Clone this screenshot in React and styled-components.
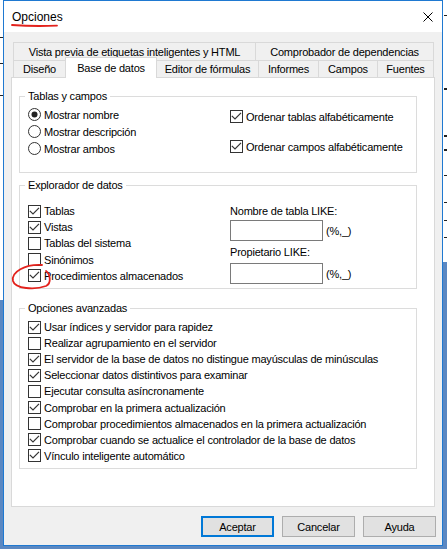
import React from 'react';
import styled, { createGlobalStyle, css } from 'styled-components';

// desktop behind the dialog: white app window on the upper edges, blue below,
// with a few dark text ticks peeking out on both sides
const GlobalStyle = createGlobalStyle`
	html, body {
		margin: 0;
		padding: 0;
	}
	body {
		width: 447px;
		height: 549px;
		overflow: hidden;
		font-family: "Liberation Sans", Arial, sans-serif;
		background:
			linear-gradient(#222, #222) 0 37px / 3px 1px no-repeat,
			linear-gradient(#222, #222) 0 63px / 3px 1px no-repeat,
			linear-gradient(#222, #222) 0 95px / 3px 1px no-repeat,
			linear-gradient(#222, #222) 100% 15px / 3px 1px no-repeat,
			linear-gradient(#222, #222) 100% 88px / 3px 2px no-repeat,
			linear-gradient(#222, #222) 100% 135px / 3px 2px no-repeat,
			linear-gradient(#222, #222) 100% 149px / 3px 2px no-repeat,
			linear-gradient(#222, #222) 100% 175px / 3px 1px no-repeat,
			linear-gradient(#222, #222) 100% 202px / 3px 1px no-repeat,
			linear-gradient(#222, #222) 100% 220px / 3px 1px no-repeat,
			linear-gradient(#222, #222) 100% 237px / 3px 1px no-repeat,
			linear-gradient(#fff, #fff) 0 0 / 3px 300px no-repeat,
			linear-gradient(#fff, #fff) 100% 0 / 4px 262px no-repeat,
			#5b88c2;
	}
`;

const topTabs = [
	{ label: 'Vista previa de etiquetas inteligentes y HTML', w: 242 },
	{ label: 'Comprobador de dependencias', w: 178 }
];

const bottomTabs = [
	{ label: 'Diseño', w: 52 },
	{ label: 'Base de datos', w: 91, active: true },
	{ label: 'Editor de fórmulas', w: 102 },
	{ label: 'Informes', w: 60 },
	{ label: 'Campos', w: 59 },
	{ label: 'Fuentes', w: 56 }
];

const explorerItems = [
	{ label: 'Tablas', on: true },
	{ label: 'Vistas', on: true },
	{ label: 'Tablas del sistema', on: false },
	{ label: 'Sinónimos', on: false },
	{ label: 'Procedimientos almacenados', on: true }
];

const advancedItems = [
	{ label: 'Usar índices y servidor para rapidez', on: true },
	{ label: 'Realizar agrupamiento en el servidor', on: false },
	{ label: 'El servidor de la base de datos no distingue mayúsculas de minúsculas', on: true },
	{ label: 'Seleccionar datos distintivos para examinar', on: true },
	{ label: 'Ejecutar consulta asíncronamente', on: false },
	{ label: 'Comprobar en la primera actualización', on: true },
	{ label: 'Comprobar procedimientos almacenados en la primera actualización', on: false },
	{ label: 'Comprobar cuando se actualice el controlador de la base de datos', on: true },
	{ label: 'Vínculo inteligente automático', on: true }
];

const CheckBox = ({ on }) => (
	<Box>
		{on && (
			<svg width="11" height="11" viewBox="0 0 11 11">
				<path d="M0.8 4.9 L4 8 L10 1.8" fill="none" stroke="#333" strokeWidth="1.2" />
			</svg>
		)}
	</Box>
);

const RadioDot = ({ on }) => (
	<svg width="13" height="13" viewBox="0 0 13 13" style={{ flex: 'none' }}>
		<circle cx="6.5" cy="6.5" r="6" fill="#fff" stroke="#333" strokeWidth="1" />
		{on && <circle cx="6.5" cy="6.5" r="3" fill="#222" />}
	</svg>
);

const Option = ({ label, on, h, radio }) => (
	<OptionRow $h={h}>
		{radio ? <RadioDot on={on} /> : <CheckBox on={on} />}
		<span>{label}</span>
	</OptionRow>
);

const App = () => (
	<>
		<GlobalStyle />
		<Dialog>
			<TitleBar>
				<Title>Opciones</Title>
				<svg width="10" height="10" viewBox="0 0 10 10">
					<path d="M0.5 0.5 L9.5 9.5 M9.5 0.5 L0.5 9.5" stroke="#000" strokeWidth="1" fill="none" />
				</svg>
			</TitleBar>

			<Body>
				<TabStrip>
					<TabRow $h={18}>
						{topTabs.map(t => <Tab key={t.label} $w={t.w}>{t.label}</Tab>)}
					</TabRow>
					<TabRow $h={17}>
						{bottomTabs.map(t => <Tab key={t.label} $w={t.w} $active={t.active}>{t.label}</Tab>)}
					</TabRow>
				</TabStrip>

				<Panel>
					<Group $mt={0} $pt={3} $pb={15}>
						<Legend>Tablas y campos</Legend>
						<GroupGrid>
							<Column>
								<Option radio on label="Mostrar nombre" h={17} />
								<Option radio label="Mostrar descripción" h={17} />
								<Option radio label="Mostrar ambos" h={17} />
							</Column>
							<SortColumn>
								<Option on label="Ordenar tablas alfabéticamente" h={17} />
								<Option on label="Ordenar campos alfabéticamente" h={17} />
							</SortColumn>
						</GroupGrid>
					</Group>

					<Group $mt={5} $pt={11} $pb={4}>
						<Legend>Explorador de datos</Legend>
						<GroupGrid>
							<Column>
								{explorerItems.map(i => <Option key={i.label} {...i} h={16.2} />)}
							</Column>
							<Column>
								<FieldLabel>Nombre de tabla LIKE:</FieldLabel>
								<FieldRow $mt={1}>
									<TextField />
									<Hint>(%,_)</Hint>
								</FieldRow>
								<FieldLabel $mt={4}>Propietario LIKE:</FieldLabel>
								<FieldRow $mt={3}>
									<TextField />
									<Hint>(%,_)</Hint>
								</FieldRow>
							</Column>
						</GroupGrid>
					</Group>

					<Group $mt={12} $pt={4} $pb={4}>
						<Legend>Opciones avanzadas</Legend>
						<AdvancedList>
							{advancedItems.map(i => <Option key={i.label} {...i} h={16.1} />)}
						</AdvancedList>
					</Group>
				</Panel>

				<ButtonRow>
					<Button $primary>Aceptar</Button>
					<Button>Cancelar</Button>
					<Button>Ayuda</Button>
				</ButtonRow>
			</Body>

			{/* hand-drawn red marks over the dialog */}
			<Marks width="440" height="546" viewBox="0 0 440 546">
				<path d="M9 25 Q31 26.6 54 25.6" />
				<path d="M74 68.6 Q100 72 135 69.2" />
				<path d="M39 265 C22 264, 8 272, 10 281 C12 289, 32 290, 43 286 C49 283, 47 274, 43 271" />
			</Marks>
		</Dialog>
	</>
);

const Dialog = styled.div`
	position: relative;
	box-sizing: border-box;
	width: 440px;
	height: 546px;
	margin-left: 3px;
	border: 1px solid #1f79d1;
	background: #f0f0f0;
	display: flex;
	flex-direction: column;
	color: #000;
	font-size: 11px;
	letter-spacing: -0.2px;
`;

const TitleBar = styled.div`
	flex: none;
	height: 31px;
	background: #fff;
	display: flex;
	align-items: center;
	justify-content: space-between;
	padding: 0 9px 0 8px;
`;

const Title = styled.span`
	font-size: 12px;
	letter-spacing: 0;
`;

const Body = styled.div`
	flex: 1;
	display: flex;
	flex-direction: column;
	padding: 10px 7px 8px;
`;

const TabStrip = styled.div`
	padding: 0 2px;
`;

const TabRow = styled.div`
	display: flex;
	height: ${p => p.$h}px;
`;

const Tab = styled.div`
	box-sizing: border-box;
	flex: 0 0 ${p => p.$w + 1}px;
	margin-right: -1px;
	border: 1px solid #d9d9d9;
	border-bottom: none;
	background: #f0f0f0;
	display: flex;
	align-items: center;
	justify-content: center;
	white-space: nowrap;
	${p => p.$active && css`
		position: relative;
		z-index: 1;
		align-self: flex-start;
		height: 21px;
		margin-top: -3px;
		padding-bottom: 1px;
		background: #fff;
	`}
`;

const Panel = styled.div`
	box-sizing: border-box;
	flex: none;
	height: 430px;
	background: #fff;
	border: 1px solid #d9d9d9;
	padding: 11px 17px 0 7px;
`;

const Group = styled.fieldset`
	margin: ${p => p.$mt}px 0 0;
	padding: ${p => p.$pt}px 0 ${p => p.$pb}px 5px;
	border: 1px solid #dcdcdc;
	min-width: 0;
`;

const Legend = styled.legend`
	padding: 0 3px;
	line-height: 14px;
`;

const GroupGrid = styled.div`
	display: grid;
	grid-template-columns: 202px 1fr;
	padding-left: 3px;
`;

const Column = styled.div`
	display: flex;
	flex-direction: column;
`;

const SortColumn = styled(Column)`
	padding-top: 2px;
	gap: 13px;
`;

const AdvancedList = styled(Column)`
	padding-left: 3px;
`;

const OptionRow = styled.label`
	display: flex;
	align-items: center;
	gap: 3px;
	height: ${p => p.$h}px;
	white-space: nowrap;
`;

const Box = styled.span`
	box-sizing: border-box;
	flex: none;
	width: 13px;
	height: 13px;
	border: 1px solid #333;
	background: #fff;
	display: flex;
`;

const FieldLabel = styled.div`
	margin-top: ${p => p.$mt || 1}px;
	line-height: 15px;
`;

const FieldRow = styled.div`
	display: flex;
	align-items: center;
	gap: 2px;
	margin-top: ${p => p.$mt}px;
`;

const TextField = styled.div`
	box-sizing: border-box;
	width: 93px;
	height: 21px;
	border: 1px solid #7a7a7a;
	background: #fff;
`;

const Hint = styled.span`
	padding-left: 1px;
`;

const ButtonRow = styled.div`
	display: flex;
	justify-content: flex-end;
	gap: 8px;
	margin-top: 9px;
	margin-right: -1px;
`;

const Button = styled.button`
	box-sizing: border-box;
	width: 73px;
	height: 21px;
	padding: 0;
	background: #e1e1e1;
	border: ${p => p.$primary ? '2px solid #0078d7' : '1px solid #adadad'};
	font: inherit;
	letter-spacing: inherit;
	color: #000;
`;

const Marks = styled.svg`
	position: absolute;
	top: -1px;
	left: -1px;
	pointer-events: none;
	overflow: visible;
	& path {
		fill: none;
		stroke: #e3221c;
		stroke-width: 1.8;
		stroke-linecap: round;
	}
`;

export default App;
